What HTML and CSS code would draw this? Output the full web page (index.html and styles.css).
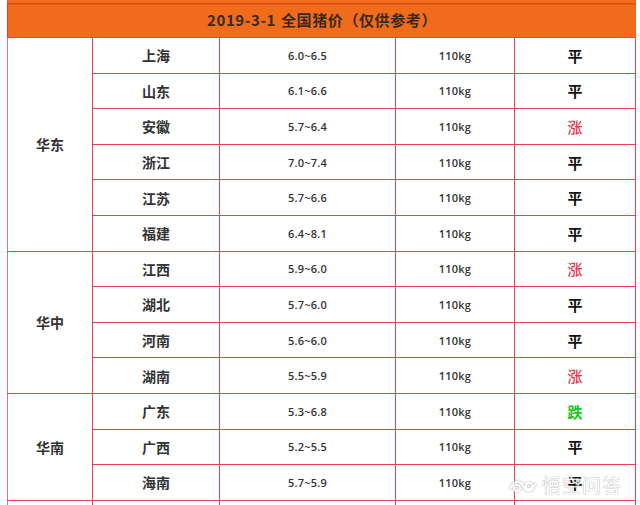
FILE: index.html
```html
<!DOCTYPE html>
<html lang="zh">
<head>
<meta charset="utf-8">
<link rel="stylesheet" href="styles.css">
</head>
<body>
<div class="page">
  <div class="title">2019-3-1 全国猪价（仅供参考）</div>
  <table class="prices">
    <colgroup>
      <col class="c-region"><col class="c-prov"><col class="c-price"><col class="c-weight"><col class="c-trend">
    </colgroup>
    <tbody>
      <tr><td class="region" rowspan="6">华东</td><td class="prov">上海</td><td class="num">6.0~6.5</td><td class="num">110kg</td><td class="trend flat">平</td></tr>
      <tr><td class="prov">山东</td><td class="num">6.1~6.6</td><td class="num">110kg</td><td class="trend flat">平</td></tr>
      <tr><td class="prov">安徽</td><td class="num">5.7~6.4</td><td class="num">110kg</td><td class="trend up">涨</td></tr>
      <tr><td class="prov">浙江</td><td class="num">7.0~7.4</td><td class="num">110kg</td><td class="trend flat">平</td></tr>
      <tr><td class="prov">江苏</td><td class="num">5.7~6.6</td><td class="num">110kg</td><td class="trend flat">平</td></tr>
      <tr><td class="prov">福建</td><td class="num">6.4~8.1</td><td class="num">110kg</td><td class="trend flat">平</td></tr>
      <tr><td class="region" rowspan="4">华中</td><td class="prov">江西</td><td class="num">5.9~6.0</td><td class="num">110kg</td><td class="trend up">涨</td></tr>
      <tr><td class="prov">湖北</td><td class="num">5.7~6.0</td><td class="num">110kg</td><td class="trend flat">平</td></tr>
      <tr><td class="prov">河南</td><td class="num">5.6~6.0</td><td class="num">110kg</td><td class="trend flat">平</td></tr>
      <tr><td class="prov">湖南</td><td class="num">5.5~5.9</td><td class="num">110kg</td><td class="trend up">涨</td></tr>
      <tr><td class="region" rowspan="3">华南</td><td class="prov">广东</td><td class="num">5.3~6.8</td><td class="num">110kg</td><td class="trend down">跌</td></tr>
      <tr><td class="prov">广西</td><td class="num">5.2~5.5</td><td class="num">110kg</td><td class="trend flat">平</td></tr>
      <tr><td class="prov">海南</td><td class="num">5.7~5.9</td><td class="num">110kg</td><td class="trend flat">平</td></tr>
      <tr><td class="region"></td><td class="prov"></td><td class="num"></td><td class="num"></td><td class="trend"></td></tr>
    </tbody>
  </table>
  <div class="watermark">
    <svg class="wm-logo" width="30" height="18" viewBox="0 0 30 18" aria-hidden="true">
      <path d="M3 12 C6 4, 12 4, 15 10 C18 16, 24 16, 27 8" fill="none" stroke="#fff" stroke-width="2.4" stroke-linecap="round"/>
      <circle cx="9" cy="12" r="3.2" fill="none" stroke="#fff" stroke-width="2"/>
      <circle cx="21" cy="10" r="3.2" fill="none" stroke="#fff" stroke-width="2"/>
    </svg>
    <span class="wm-text">悟空问答</span>
  </div>
</div>
</body>
</html>
```
FILE: styles.css
```css
html, body {
  margin: 0;
  padding: 0;
  background: #ffffff;
}
.page {
  position: relative;
  width: 640px;
  height: 505px;
  overflow: hidden;
  font-family: "Noto Sans CJK SC", "Noto Sans", sans-serif;
}
.title {
  margin-left: 7px;
  width: 628px;
  height: 34px;
  background: #f06c1c;
  border-top: 3px solid #f06c1c;
  box-shadow: inset 0 1px 0 #dd4c12, inset 0 2px 0 #e5561a;
  color: #3a2a1e;
  font-weight: 700;
  font-size: 15px;
  line-height: 34px;
  letter-spacing: 0.6px;
  word-spacing: 1px;
  text-align: center;
  border-left: 1px solid #e83a3a;
  box-sizing: content-box;
}
.prices {
  margin-left: 7px;
  border-collapse: collapse;
  table-layout: fixed;
  width: 628px;
}
.c-region { width: 85px; }
.c-prov { width: 127px; }
.c-price { width: 176px; }
.c-weight { width: 119px; }
.c-trend { width: 121px; }
.prices td {
  border: 1px solid #e8414f;
  height: 34.6px;
  padding: 0;
  text-align: center;
  color: #333;
}
.prices td.region {
  border-left-color: #ee7080;
  font-weight: 700;
  font-size: 14px;
}
.prices td.prov {
  font-weight: 700;
  font-size: 14px;
}
.prices td.num {
  font-family: "Open Sans", "Noto Sans", sans-serif;
  font-weight: 600;
  font-size: 11px;
  letter-spacing: 0.2px;
}
.prices td.trend {
  font-weight: 700;
  font-size: 15px;
}
.prices td.flat { color: #111; }
.prices td.up { color: #e8334a; font-weight: 500; }
.prices td.down { color: #22c51e; }
.watermark {
  position: absolute;
  left: 508px;
  top: 471px;
  display: flex;
  align-items: center;
  gap: 4px;
  opacity: 0.85;
}
.wm-text {
  color: #ffffff;
  font-size: 19px;
  font-weight: 400;
  letter-spacing: 1px;
  text-shadow: 0 0 1px #999, 0 0 1px #999;
}
.wm-logo {
  filter: drop-shadow(0 0 1px #999);
}
```
